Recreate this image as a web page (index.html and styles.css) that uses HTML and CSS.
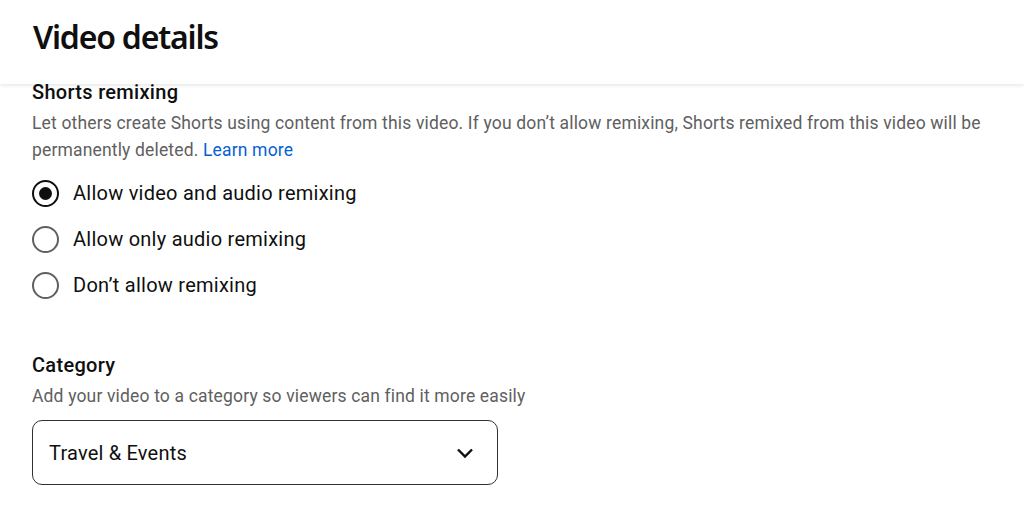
FILE: index.html
```html
<!DOCTYPE html>
<html lang="en">
<head>
    <meta charset="UTF-8">
    <meta name="viewport" content="width=device-width, initial-scale=1.0">
    <title>Video details</title>
    <link rel="stylesheet" href="styles.css">
</head>
<body>
    <header class="page-header">
        <h1>Video details</h1>
    </header>

    <main class="details">
        <section class="field">
            <h2>Shorts remixing</h2>
            <p class="hint">Let others create Shorts using content from this video. If you don’t allow remixing, Shorts remixed from this video will be permanently deleted. <a href="#">Learn more</a></p>

            <div class="radio-group">
                <label class="radio-row">
                    <span class="radio checked"></span>
                    <span>Allow video and audio remixing</span>
                </label>
                <label class="radio-row">
                    <span class="radio"></span>
                    <span>Allow only audio remixing</span>
                </label>
                <label class="radio-row">
                    <span class="radio"></span>
                    <span>Don’t allow remixing</span>
                </label>
            </div>
        </section>

        <section class="field category">
            <h2>Category</h2>
            <p class="hint">Add your video to a category so viewers can find it more easily</p>

            <div class="select">
                <span>Travel &amp; Events</span>
                <svg class="chevron" viewBox="0 0 24 24" width="24" height="24">
                    <path d="M5 8.5l7 7 7-7" fill="none" stroke="#0f0f0f" stroke-width="2.4"/>
                </svg>
            </div>
        </section>
    </main>
</body>
</html>
```

FILE: styles.css
```css
* {
    margin: 0;
    padding: 0;
    box-sizing: border-box;
}

body {
    font-family: Roboto, "Liberation Sans", sans-serif;
    color: #0f0f0f;
    background: #fff;
    overflow: hidden;
}

.page-header {
    position: relative;
    z-index: 1;
    height: 84px;
    padding-left: 33px;
    background: #fff;
    box-shadow: 0 1px 4px rgba(0, 0, 0, 0.12);
}

.page-header h1 {
    font-family: "Noto Sans", sans-serif;
    font-size: 32px;
    font-weight: 600;
    letter-spacing: -1.2px;
    line-height: 74px;
}

/* list is scrolled a little under the header */
.details {
    margin-top: -4px;
    padding: 0 32px;
}

.field h2 {
    font-size: 20px;
    font-weight: 500;
    letter-spacing: 0.3px;
    line-height: 24px;
}

.hint {
    margin-top: 6px;
    font-size: 17.5px;
    letter-spacing: 0.16px;
    line-height: 27px;
    color: #606060;
}

.hint a {
    color: #065fd4;
    text-decoration: none;
}

.radio-group {
    margin-top: 6px;
}

.radio-row {
    display: flex;
    align-items: center;
    gap: 14px;
    height: 46px;
    font-size: 20px;
    letter-spacing: 0.25px;
}

.radio {
    width: 27px;
    height: 27px;
    border-radius: 50%;
    border: 2.5px solid #606060;
    display: flex;
    align-items: center;
    justify-content: center;
}

.radio.checked {
    border-color: #0f0f0f;
}

.radio.checked::after {
    content: "";
    width: 13px;
    height: 13px;
    border-radius: 50%;
    background: #0f0f0f;
}

.category {
    margin-top: 45px;
}

.category .hint {
    margin-top: 6px;
}

.select {
    margin-top: 10px;
    width: 466px;
    height: 65px;
    border: 1.5px solid #303030;
    border-radius: 10px;
    display: flex;
    align-items: center;
    justify-content: space-between;
    padding: 0 20px 0 16px;
    font-size: 20px;
    letter-spacing: 0.2px;
}
```
